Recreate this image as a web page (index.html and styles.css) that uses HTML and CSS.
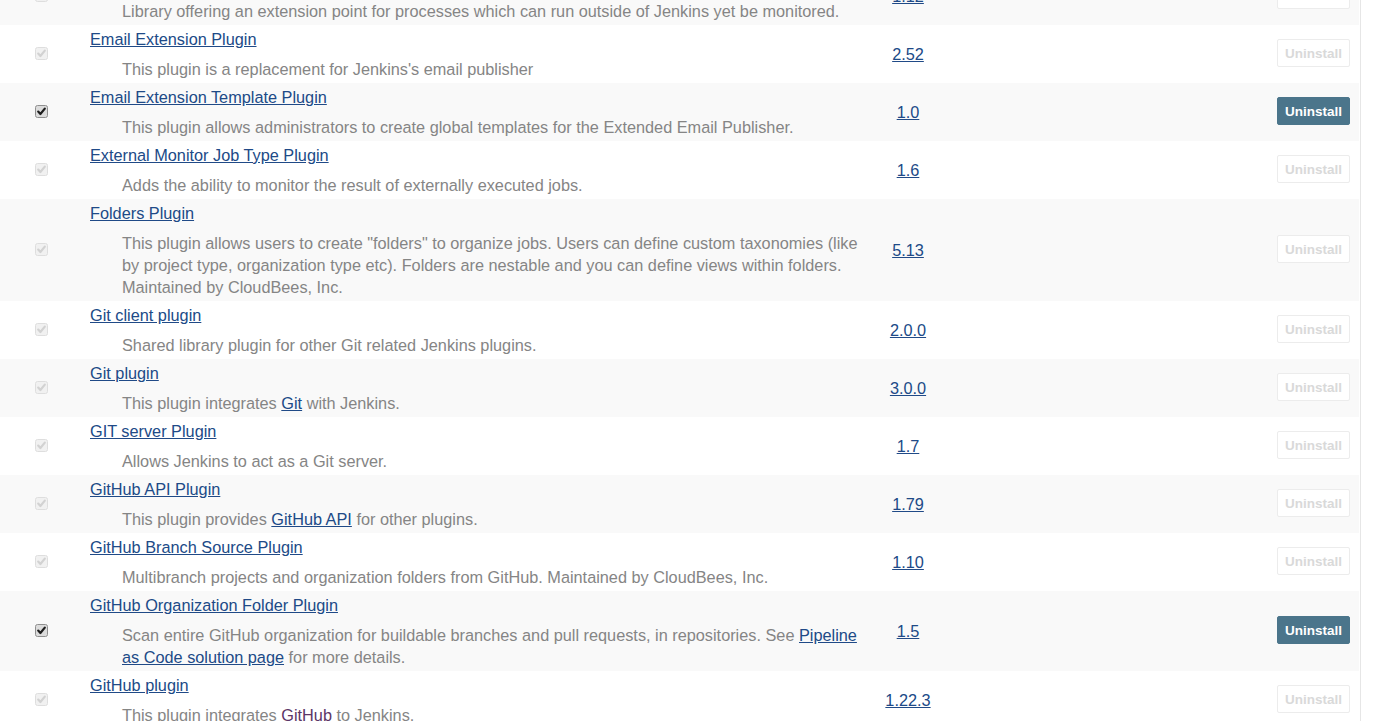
FILE: index.html
```html
<!DOCTYPE html>
<html lang="en">
<head>
<meta charset="utf-8">
<title>Plugin Manager - Installed</title>
<link rel="stylesheet" href="styles.css">
</head>
<body>
<div class="pane">
<table class="plugins">
  <colgroup>
    <col class="w-enable"><col class="w-name"><col class="w-ver"><col class="w-prev"><col class="w-uninst">
  </colgroup>
  <tbody>
    <tr class="alt">
      <td class="c-enable"><span class="cb off"><svg viewBox="0 0 13 13" width="13" height="13"><rect x="0.5" y="0.5" width="12" height="12" rx="2"/><path d="M3.2 6.6 L5.4 9 L9.8 3.6"/></svg></span></td>
      <td class="c-name"><div class="title"><a href="#">Durable Task Plugin</a></div><div class="desc">Library offering an extension point for processes which can run outside of Jenkins yet be monitored.</div></td>
      <td class="c-ver"><a href="#">1.12</a></td>
      <td class="c-prev"></td>
      <td class="c-uninst"><button class="btn" disabled>Uninstall</button></td>
    </tr>
    <tr>
      <td class="c-enable"><span class="cb off"><svg viewBox="0 0 13 13" width="13" height="13"><rect x="0.5" y="0.5" width="12" height="12" rx="2"/><path d="M3.2 6.6 L5.4 9 L9.8 3.6"/></svg></span></td>
      <td class="c-name"><div class="title"><a href="#">Email Extension Plugin</a></div><div class="desc">This plugin is a replacement for Jenkins's email publisher</div></td>
      <td class="c-ver"><a href="#">2.52</a></td>
      <td class="c-prev"></td>
      <td class="c-uninst"><button class="btn" disabled>Uninstall</button></td>
    </tr>
    <tr class="alt">
      <td class="c-enable"><span class="cb on"><svg viewBox="0 0 13 13" width="13" height="13"><rect x="0.5" y="0.5" width="12" height="12" rx="2"/><path d="M3.2 6.6 L5.4 9 L9.8 3.6"/></svg></span></td>
      <td class="c-name"><div class="title"><a href="#">Email Extension Template Plugin</a></div><div class="desc">This plugin allows administrators to create global templates for the Extended Email Publisher.</div></td>
      <td class="c-ver"><a href="#">1.0</a></td>
      <td class="c-prev"></td>
      <td class="c-uninst"><button class="btn active">Uninstall</button></td>
    </tr>
    <tr>
      <td class="c-enable"><span class="cb off"><svg viewBox="0 0 13 13" width="13" height="13"><rect x="0.5" y="0.5" width="12" height="12" rx="2"/><path d="M3.2 6.6 L5.4 9 L9.8 3.6"/></svg></span></td>
      <td class="c-name"><div class="title"><a href="#">External Monitor Job Type Plugin</a></div><div class="desc">Adds the ability to monitor the result of externally executed jobs.</div></td>
      <td class="c-ver"><a href="#">1.6</a></td>
      <td class="c-prev"></td>
      <td class="c-uninst"><button class="btn" disabled>Uninstall</button></td>
    </tr>
    <tr class="alt">
      <td class="c-enable"><span class="cb off"><svg viewBox="0 0 13 13" width="13" height="13"><rect x="0.5" y="0.5" width="12" height="12" rx="2"/><path d="M3.2 6.6 L5.4 9 L9.8 3.6"/></svg></span></td>
      <td class="c-name"><div class="title"><a href="#">Folders Plugin</a></div><div class="desc">This plugin allows users to create "folders" to organize jobs. Users can define custom taxonomies (like by project type, organization type etc). Folders are nestable and you can define views within folders. Maintained by CloudBees, Inc.</div></td>
      <td class="c-ver"><a href="#">5.13</a></td>
      <td class="c-prev"></td>
      <td class="c-uninst"><button class="btn" disabled>Uninstall</button></td>
    </tr>
    <tr>
      <td class="c-enable"><span class="cb off"><svg viewBox="0 0 13 13" width="13" height="13"><rect x="0.5" y="0.5" width="12" height="12" rx="2"/><path d="M3.2 6.6 L5.4 9 L9.8 3.6"/></svg></span></td>
      <td class="c-name"><div class="title"><a href="#">Git client plugin</a></div><div class="desc">Shared library plugin for other Git related Jenkins plugins.</div></td>
      <td class="c-ver"><a href="#">2.0.0</a></td>
      <td class="c-prev"></td>
      <td class="c-uninst"><button class="btn" disabled>Uninstall</button></td>
    </tr>
    <tr class="alt">
      <td class="c-enable"><span class="cb off"><svg viewBox="0 0 13 13" width="13" height="13"><rect x="0.5" y="0.5" width="12" height="12" rx="2"/><path d="M3.2 6.6 L5.4 9 L9.8 3.6"/></svg></span></td>
      <td class="c-name"><div class="title"><a href="#">Git plugin</a></div><div class="desc">This plugin integrates <a href="#">Git</a> with Jenkins.</div></td>
      <td class="c-ver"><a href="#">3.0.0</a></td>
      <td class="c-prev"></td>
      <td class="c-uninst"><button class="btn" disabled>Uninstall</button></td>
    </tr>
    <tr>
      <td class="c-enable"><span class="cb off"><svg viewBox="0 0 13 13" width="13" height="13"><rect x="0.5" y="0.5" width="12" height="12" rx="2"/><path d="M3.2 6.6 L5.4 9 L9.8 3.6"/></svg></span></td>
      <td class="c-name"><div class="title"><a href="#">GIT server Plugin</a></div><div class="desc">Allows Jenkins to act as a Git server.</div></td>
      <td class="c-ver"><a href="#">1.7</a></td>
      <td class="c-prev"></td>
      <td class="c-uninst"><button class="btn" disabled>Uninstall</button></td>
    </tr>
    <tr class="alt">
      <td class="c-enable"><span class="cb off"><svg viewBox="0 0 13 13" width="13" height="13"><rect x="0.5" y="0.5" width="12" height="12" rx="2"/><path d="M3.2 6.6 L5.4 9 L9.8 3.6"/></svg></span></td>
      <td class="c-name"><div class="title"><a href="#">GitHub API Plugin</a></div><div class="desc">This plugin provides <a href="#">GitHub API</a> for other plugins.</div></td>
      <td class="c-ver"><a href="#">1.79</a></td>
      <td class="c-prev"></td>
      <td class="c-uninst"><button class="btn" disabled>Uninstall</button></td>
    </tr>
    <tr>
      <td class="c-enable"><span class="cb off"><svg viewBox="0 0 13 13" width="13" height="13"><rect x="0.5" y="0.5" width="12" height="12" rx="2"/><path d="M3.2 6.6 L5.4 9 L9.8 3.6"/></svg></span></td>
      <td class="c-name"><div class="title"><a href="#">GitHub Branch Source Plugin</a></div><div class="desc">Multibranch projects and organization folders from GitHub. Maintained by CloudBees, Inc.</div></td>
      <td class="c-ver"><a href="#">1.10</a></td>
      <td class="c-prev"></td>
      <td class="c-uninst"><button class="btn" disabled>Uninstall</button></td>
    </tr>
    <tr class="alt">
      <td class="c-enable"><span class="cb on"><svg viewBox="0 0 13 13" width="13" height="13"><rect x="0.5" y="0.5" width="12" height="12" rx="2"/><path d="M3.2 6.6 L5.4 9 L9.8 3.6"/></svg></span></td>
      <td class="c-name"><div class="title"><a href="#">GitHub Organization Folder Plugin</a></div><div class="desc">Scan entire GitHub organization for buildable branches and pull requests, in repositories. See <a href="#">Pipeline as Code solution page</a> for more details.</div></td>
      <td class="c-ver"><a href="#">1.5</a></td>
      <td class="c-prev"></td>
      <td class="c-uninst"><button class="btn active">Uninstall</button></td>
    </tr>
    <tr>
      <td class="c-enable"><span class="cb off"><svg viewBox="0 0 13 13" width="13" height="13"><rect x="0.5" y="0.5" width="12" height="12" rx="2"/><path d="M3.2 6.6 L5.4 9 L9.8 3.6"/></svg></span></td>
      <td class="c-name"><div class="title"><a href="#">GitHub plugin</a></div><div class="desc">This plugin integrates <a href="#" class="visited">GitHub</a> to Jenkins.</div></td>
      <td class="c-ver"><a href="#">1.22.3</a></td>
      <td class="c-prev"></td>
      <td class="c-uninst"><button class="btn" disabled>Uninstall</button></td>
    </tr>
  </tbody>
</table>
</div>
</body>
</html>
```

FILE: styles.css
```css
html, body {
  margin: 0;
  padding: 0;
  background: #ffffff;
  overflow: hidden;
}

body {
  font-family: "Liberation Sans", Arial, Helvetica, sans-serif;
  font-size: 16.3px;
  color: #333333;
}

.pane {
  width: 1360px;
  border-right: 1px solid #e6e6e6;
  min-height: 760px;
  margin-top: -33px;
}

.plugins {
  width: 1359px;
  table-layout: fixed;
  border-collapse: collapse;
  border-spacing: 0;
}

.w-enable { width: 82px; }
.w-name { width: 786px; }
.w-ver { width: 80px; }
.w-uninst { width: 88px; }

.plugins td {
  padding: 0;
  vertical-align: middle;
}

.plugins tr { background: #ffffff; }
.plugins tr.alt { background: #f9f9f9; }

a {
  color: #204a87;
  text-decoration: underline;
}

a.visited { color: #5c3566; }

.c-enable { text-align: center; }

.cb {
  display: inline-block;
  width: 13px;
  height: 13px;
  vertical-align: middle;
  position: relative;
  top: -2px;
}

.cb svg { display: block; }

.cb path {
  fill: none;
  stroke-width: 2.2;
  stroke-linecap: round;
  stroke-linejoin: round;
}

.cb.on rect {
  fill: #dcdcdc;
  stroke: #8f8f8f;
  stroke-width: 1;
}
.cb.on path { stroke: #1e1e1e; }

.cb.off rect {
  fill: #f1f1f1;
  stroke: #dedede;
  stroke-width: 1;
}
.cb.off path { stroke: #d2d2d2; }

.c-name {
  padding: 3px 8px 3px 8px !important;
}

.title {
  line-height: 22px;
}

.desc {
  margin-top: 8px;
  padding-left: 32px;
  line-height: 22px;
  color: #858585;
}

.c-ver {
  text-align: center;
  line-height: 22px;
  padding-bottom: 1px !important;
}

.c-uninst {
  text-align: right;
  padding-right: 9px !important;
}

.btn {
  font-family: "Liberation Sans", Arial, Helvetica, sans-serif;
  font-size: 13.5px;
  font-weight: bold;
  width: 73px;
  height: 28px;
  padding: 0;
  border-radius: 2px;
  border: 1px solid #ececec;
  background: #ffffff;
  color: #d9d9d9;
  vertical-align: middle;
  position: relative;
  top: -1px;
}

.btn.active {
  background: #4b758b;
  border-color: #4b758b;
  color: #ffffff;
}
```
